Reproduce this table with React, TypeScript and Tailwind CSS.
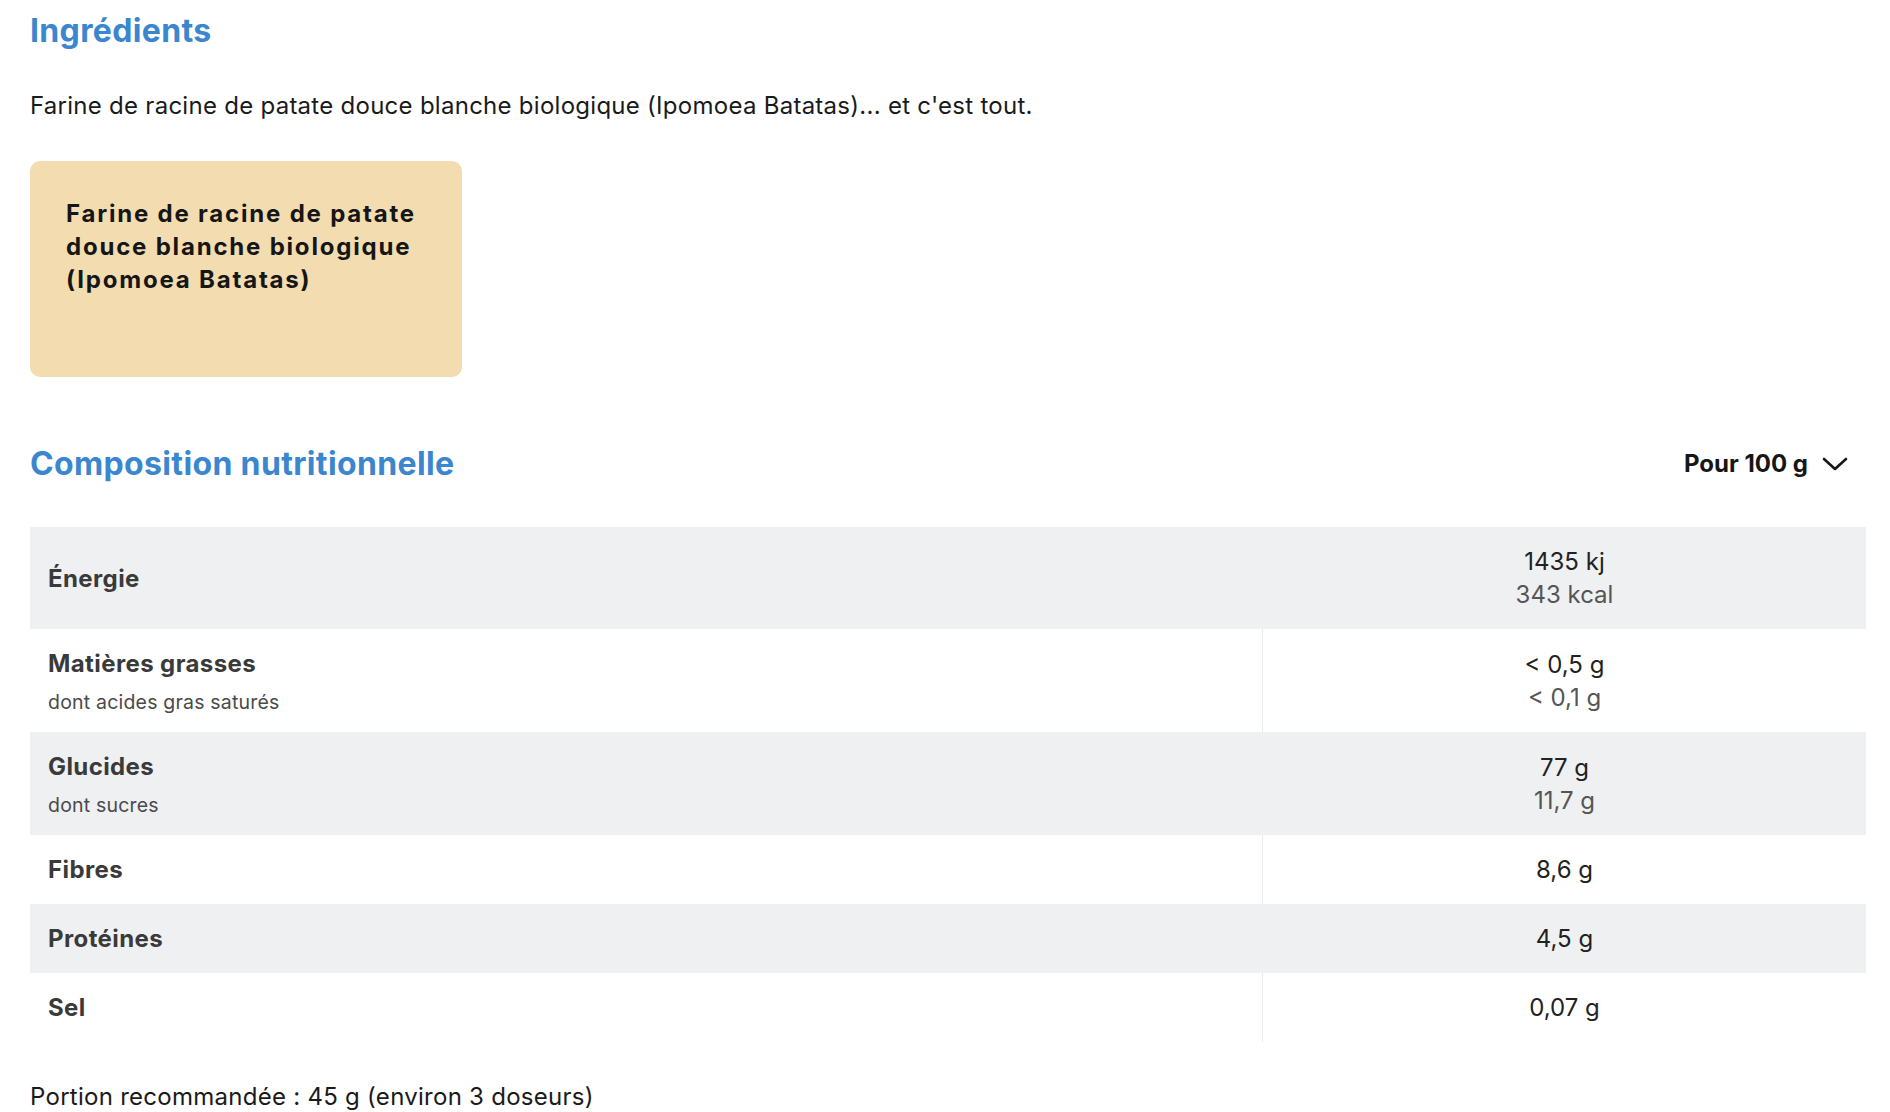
import React from 'react';

type Row = {
  label: string;
  sub?: string;
  value: string;
  subValue?: string;
};

const ROWS: Row[] = [
  { label: 'Énergie', value: '1435 kj', subValue: '343 kcal' },
  { label: 'Matières grasses', sub: 'dont acides gras saturés', value: '< 0,5 g', subValue: '< 0,1 g' },
  { label: 'Glucides', sub: 'dont sucres', value: '77 g', subValue: '11,7 g' },
  { label: 'Fibres', value: '8,6 g' },
  { label: 'Protéines', value: '4,5 g' },
  { label: 'Sel', value: '0,07 g' },
];

const ChevronDown = () => (
  <svg width="26" height="14" viewBox="0 0 26 14" fill="none" stroke="currentColor" strokeWidth={2.6} strokeLinecap="round" strokeLinejoin="round">
    <path d="M2 2 L13 12 L24 2" />
  </svg>
);

export default function App() {
  return (
    <div className="min-h-screen bg-white font-['Inter','Liberation_Sans',sans-serif] text-[#1a1a1a] pl-[30px] pr-[24px] pt-[11px] pb-[10px]">
      {/* Ingrédients */}
      <h2 className="text-[32px] leading-[40px] font-bold tracking-[0.35px] text-[#3a86cf]">Ingrédients</h2>
      <p className="mt-[39px] text-[24px] leading-[32px] tracking-[0.27px]">
        Farine de racine de patate douce blanche biologique (Ipomoea Batatas)... et c'est tout.
      </p>

      <div className="mt-[39px] w-[432px] h-[216px] rounded-[10px] bg-[#f3dcb0] p-[36px]">
        <p className="text-[24px] leading-[33px] font-bold tracking-[1.8px] text-[#161616]">
          Farine de racine de patate douce blanche biologique (Ipomoea Batatas)
        </p>
      </div>

      {/* Composition nutritionnelle */}
      <div className="mt-[67px] flex items-center justify-between">
        <h2 className="text-[32px] leading-[40px] font-bold tracking-[0.35px] text-[#3a86cf]">Composition nutritionnelle</h2>
        <button className="flex items-center gap-[14px] pr-[18px] text-[24px] leading-[32px] font-bold text-[#161616]">
          Pour 100 g
          <ChevronDown />
        </button>
      </div>

      <div className="mt-[43px]">
        {ROWS.map((row, i) => {
          const grey = i % 2 === 0;
          return (
            <div
              key={row.label}
              className={`grid grid-cols-[1fr_604px] ${grey ? 'bg-[#eff0f2]' : 'bg-white'}`}
            >
              <div className="flex flex-col justify-center pl-[18px] pt-[19px] pb-[18px]">
                <div className="text-[24px] leading-[32px] font-bold tracking-[0.4px] text-[#3a3a3a]">{row.label}</div>
                {row.sub && (
                  <div className="mt-[10px] text-[19.5px] leading-[24px] tracking-[0.2px] text-[#4a4a4a]">{row.sub}</div>
                )}
              </div>
              <div
                className={`flex flex-col items-center justify-center pt-[19px] pb-[18px] border-l ${
                  grey ? 'border-transparent' : 'border-[#ececee]'
                }`}
              >
                <div className="text-[24px] leading-[32px] text-[#222]">{row.value}</div>
                {row.subValue && (
                  <div className="text-[24px] leading-[33px] text-[#555]">{row.subValue}</div>
                )}
              </div>
            </div>
          );
        })}
      </div>

      <p className="mt-[39px] text-[24px] leading-[32px] tracking-[0.27px]">Portion recommandée : 45 g (environ 3 doseurs)</p>
    </div>
  );
}
